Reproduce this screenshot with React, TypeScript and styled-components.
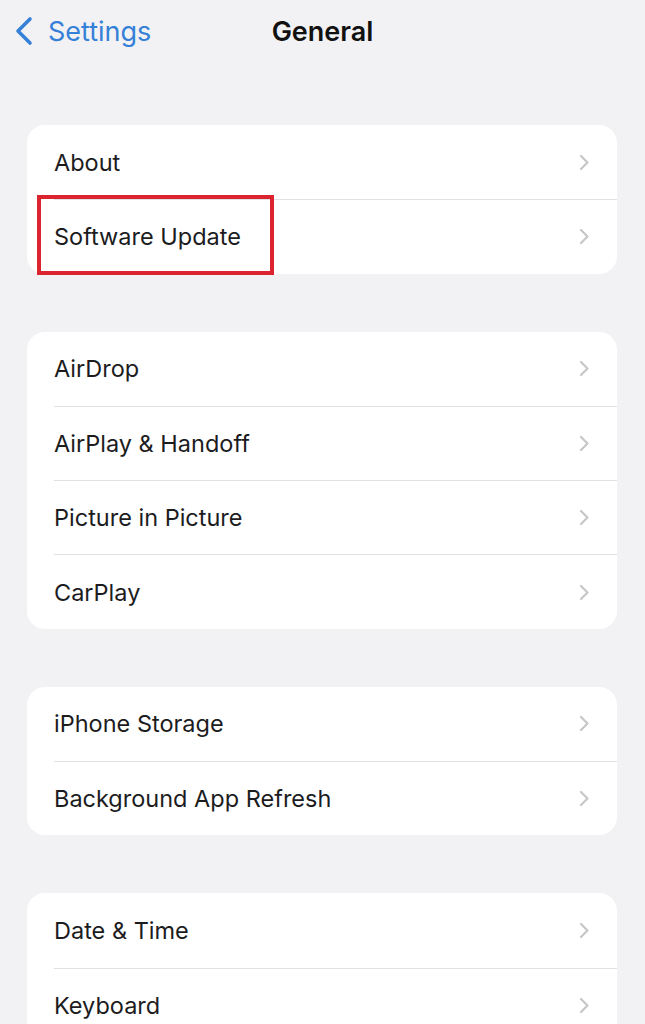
import { createGlobalStyle, styled } from 'styled-components'

const GlobalStyle = createGlobalStyle`
  html, body {
    margin: 0;
    padding: 0;
    background: #f2f2f4;
  }
  body {
    font-family: Inter, 'Liberation Sans', sans-serif;
    -webkit-font-smoothing: antialiased;
  }
`

const Page = styled.div`
  width: 645px;
  min-height: 1024px;
  background: #f2f2f4;
  overflow: hidden;
`

const NavBar = styled.div`
  position: relative;
  height: 62px;
  display: flex;
  align-items: center;
  justify-content: center;
`

const BackButton = styled.div`
  position: absolute;
  left: 14px;
  top: 0;
  height: 62px;
  display: flex;
  align-items: center;
  gap: 14px;
  color: #3581d8;
  font-size: 27px;
`

const Title = styled.div`
  font-size: 27px;
  font-weight: 600;
  color: #111;
`

const List = styled.div`
  display: flex;
  flex-direction: column;
  gap: 58px;
  padding: 63px 28px 0 27px;
`

const Card = styled.div`
  background: #fff;
  border-radius: 18px;
`

const Row = styled.div`
  position: relative;
  height: 74.3px;
  display: flex;
  align-items: center;
  padding-left: 27px;

  & + & .row-inner {
    border-top: 1.5px solid #e1e1e3;
  }
`

const RowInner = styled.div`
  flex: 1;
  height: 100%;
  box-sizing: border-box;
  display: flex;
  align-items: center;
  justify-content: space-between;
  padding-right: 27px;
`

const Label = styled.span`
  font-size: 23.5px;
  color: #1c1c1e;
`

const Highlight = styled.div`
  position: absolute;
  left: 10px;
  top: -4px;
  width: 237px;
  height: 80px;
  box-sizing: border-box;
  border: 4px solid #dc2330;
  pointer-events: none;
`

const BackChevron = () => (
  <svg width='20' height='30' viewBox='0 0 20 30'>
    <polyline
      points='16,3 4,15 16,27'
      fill='none'
      stroke='#3581d8'
      strokeWidth='3.6'
      strokeLinecap='round'
      strokeLinejoin='round'
    />
  </svg>
)

const Chevron = () => (
  <svg width='11' height='17' viewBox='0 0 11 17'>
    <polyline
      points='2,2 8.5,8.5 2,15'
      fill='none'
      stroke='#c7c7ca'
      strokeWidth='2.2'
      strokeLinecap='round'
      strokeLinejoin='round'
    />
  </svg>
)

const groups: { label: string; highlight?: boolean }[][] = [
  [{ label: 'About' }, { label: 'Software Update', highlight: true }],
  [
    { label: 'AirDrop' },
    { label: 'AirPlay & Handoff' },
    { label: 'Picture in Picture' },
    { label: 'CarPlay' },
  ],
  [{ label: 'iPhone Storage' }, { label: 'Background App Refresh' }],
  [{ label: 'Date & Time' }, { label: 'Keyboard' }],
]

export default function App() {
  return (
    <Page>
      <GlobalStyle />
      <NavBar>
        <BackButton>
          <BackChevron />
          Settings
        </BackButton>
        <Title>General</Title>
      </NavBar>
      <List>
        {groups.map((rows, i) => (
          <Card key={i}>
            {rows.map(row => (
              <Row key={row.label}>
                <RowInner className='row-inner'>
                  <Label>{row.label}</Label>
                  <Chevron />
                </RowInner>
                {row.highlight && <Highlight />}
              </Row>
            ))}
          </Card>
        ))}
      </List>
    </Page>
  )
}
